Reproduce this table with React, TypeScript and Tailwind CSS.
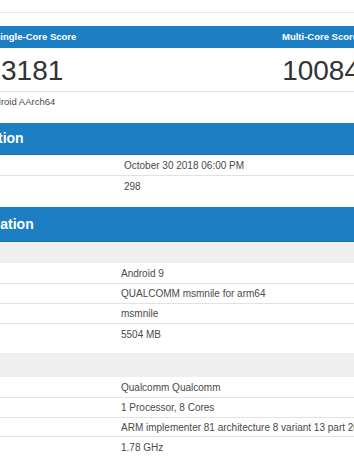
import React from 'react';

type Row = { label: string; value: string };

const resultRows: Row[] = [
  { label: 'Upload Date', value: 'October 30 2018 06:00 PM' },
  { label: 'Views', value: '298' },
];

const systemGroups: { title: string; band: string; rows: Row[]; heights: string[] }[] = [
  {
    title: 'System Information',
    band: 'h-[21px]',
    heights: ['h-[21px] border-b', 'h-[20px] border-b', 'h-[20px] border-b', 'h-[20px]'],
    rows: [
      { label: 'Operating System', value: 'Android 9' },
      { label: 'Model', value: 'QUALCOMM msmnile for arm64' },
      { label: 'Motherboard', value: 'msmnile' },
      { label: 'Memory', value: '5504 MB' },
    ],
  },
  {
    title: 'Processor',
    band: 'mt-[9px] h-[24px]',
    heights: ['h-[21px] border-b', 'h-[20px] border-b', 'h-[19px] border-b', 'h-[20px]'],
    rows: [
      { label: 'Name', value: 'Qualcomm Qualcomm' },
      { label: 'Topology', value: '1 Processor, 8 Cores' },
      { label: 'Identifier', value: 'ARM implementer 81 architecture 8 variant 13 part 2053 revision 14' },
      { label: 'Base Frequency', value: '1.78 GHz' },
    ],
  },
];

const App: React.FC = () => {
  return (
    <div className="w-[354px] h-[472px] overflow-hidden bg-white font-['Liberation_Sans',Arial,sans-serif] text-[#4a4a4a]">
      <div className="ml-[-100px] w-[470px]">
        <div className="h-[13px] border-b border-[#e9e9e9]" />

        {/* Scores */}
        <div className="mt-[13px]">
          <div className="h-[22px] bg-[#1c7fc4] flex items-center justify-between pl-[94px] pr-[12px] text-[9.5px] font-bold text-white">
            <span>Single-Core Score</span>
            <span>Multi-Core Score</span>
          </div>
          <div className="h-[44px] border-b border-[#e2e2e2] flex items-center justify-between pl-[101px] pr-[10px] text-[28px] text-[#333] leading-none pt-[2px]">
            <span>3181</span>
            <span>10084</span>
          </div>
          <div className="h-[20px] flex items-center pl-[84px] text-[9.5px] whitespace-nowrap">
            Android AArch64
          </div>
        </div>

        {/* Result Information */}
        <div className="mt-[11px]">
          <div className="h-[32px] bg-[#1c7fc4] border-b border-[#1870ad] flex items-center text-[14px] font-bold text-white whitespace-nowrap">
            Result Information
          </div>
          {resultRows.map((row, i) => (
            <div
              key={row.label}
              className={`flex items-center text-[10px] whitespace-nowrap border-[#e2e2e2] ${i === 0 ? 'h-[21px] border-b' : 'h-[20px]'}`}
            >
              <span className="w-[224px] pl-[3px] shrink-0">{row.label}</span>
              <span>{row.value}</span>
            </div>
          ))}
        </div>

        {/* System Information */}
        <div className="mt-[11px]">
          <div className="h-[35px] bg-[#1c7fc4] border-b border-[#1870ad] flex items-center pl-[3px] text-[14px] font-bold text-white whitespace-nowrap">
            System Information
          </div>
          {systemGroups.map((group) => (
            <div key={group.title}>
              <div className={`${group.band} bg-[#efefef] flex items-center pl-[3px] text-[9.5px] text-[#333] whitespace-nowrap`}>
                {group.title}
              </div>
              {group.rows.map((row, i) => (
                <div
                  key={row.label}
                  className={`flex items-center text-[10px] whitespace-nowrap border-[#e2e2e2] ${group.heights[i]}`}
                >
                  <span className="w-[221px] pl-[3px] shrink-0">{row.label}</span>
                  <span>{row.value}</span>
                </div>
              ))}
            </div>
          ))}
        </div>
      </div>
    </div>
  );
};

export default App;
